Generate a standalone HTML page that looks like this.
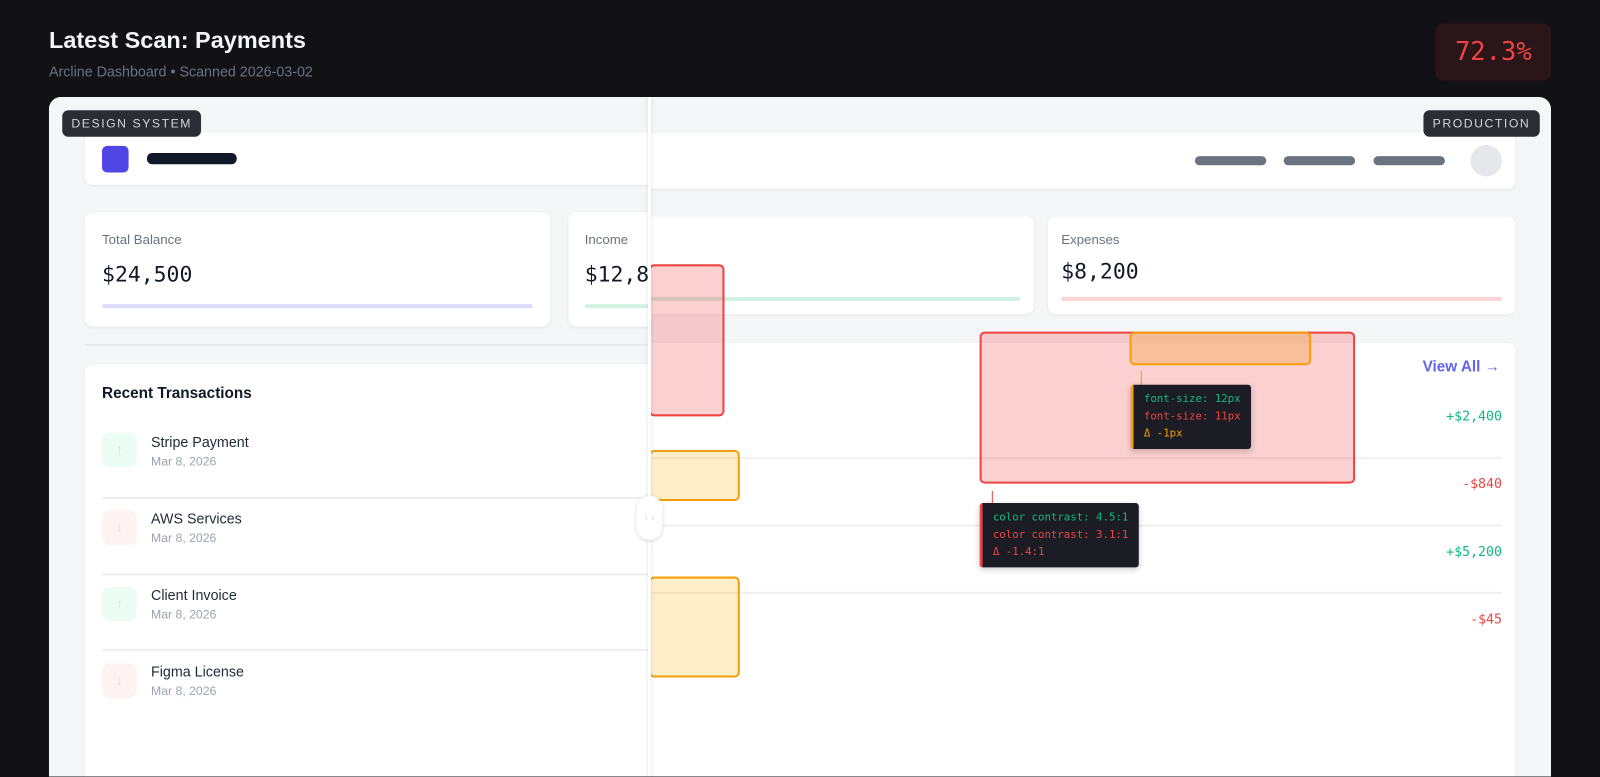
<!DOCTYPE html>
<html style="overflow:hidden;height:777px"><head><style>
*{margin:0;padding:0;box-sizing:border-box}
body{width:1600px;height:777px;background:#111116;font-family:"Liberation Sans",sans-serif;overflow:hidden;position:relative}
#w{position:absolute;left:0;top:0;width:1568px;height:761px;overflow:hidden;transform:scale(1.0204);transform-origin:0 0}
.a{position:absolute}
.mono{font-family:"DejaVu Sans Mono","Liberation Mono",monospace}
.card{position:absolute;background:#fff;border-radius:8px;box-shadow:0 1px 3px rgba(0,0,0,.06)}
.lbl{font-size:13px;color:#6b7280}
.val{font-size:21px;color:#111827}
.bar{position:absolute;height:4px;border-radius:2px}
.tag{position:absolute;background:#2c2c34;color:#d1d5db;font-size:12px;letter-spacing:1.5px;padding:6px 9px;border-radius:6px}
.ic{position:absolute;width:34px;height:34px;border-radius:8px;color:#c9e9d8;font-size:13px;text-align:center;line-height:34px}
.nm{position:absolute;font-size:14px;color:#1f2937}
.dt{position:absolute;font-size:12px;color:#9ca3af}
.hl{position:absolute;height:2px;background:#eef0f2}
.amt{position:absolute;right:48px;font-size:13px}
.tip{position:absolute;background:#1c1c24;font-size:10.5px;line-height:17px;padding:6px 10px;border-radius:3px;box-shadow:0 2px 6px rgba(0,0,0,.2)}
</style></head><body><div id="w">
<div class="a" style="left:48px;top:26px;font-size:23px;font-weight:bold;color:#f3f4f6">Latest Scan: Payments</div>
<div class="a" style="left:48px;top:62px;font-size:14px;color:#6b7280">Arcline Dashboard • Scanned 2026-03-02</div>
<div class="a mono" style="left:1407px;top:23px;width:113px;height:56px;background:#2a1518;border-radius:8px;color:#ef4444;font-size:25px;text-align:center;line-height:56px">72.3%</div>

<div class="a" style="left:48px;top:95px;width:1472px;height:720px;background:#f5f6f8;border-radius:12px;overflow:hidden">
 <div class="card" style="left:0;top:35px;width:1437px;height:55px"></div>
 <div class="a" style="left:1123px;top:58px;width:70px;height:9px;border-radius:5px;background:#6b7280"></div>
 <div class="a" style="left:1210px;top:58px;width:70px;height:9px;border-radius:5px;background:#6b7280"></div>
 <div class="a" style="left:1298px;top:58px;width:70px;height:9px;border-radius:5px;background:#6b7280"></div>
 <div class="a" style="left:1393px;top:47px;width:31px;height:31px;border-radius:50%;background:#e5e7eb"></div>
 <div class="card" style="left:509px;top:117px;width:456px;height:96px"></div>
 <div class="bar" style="left:526px;top:196px;width:426px;background:#d1f2e2"></div>
 <div class="card" style="left:979px;top:117px;width:458px;height:96px"></div>
 <div class="a lbl" style="left:992px;top:132px">Expenses</div>
 <div class="a val mono" style="left:992px;top:159px">$8,200</div>
 <div class="bar" style="left:992px;top:196px;width:432px;background:#fdd5d5"></div>
 <div class="card" style="left:35px;top:241px;width:1402px;height:520px"></div>
 <div class="a" style="right:50px;top:256px;font-size:15px;font-weight:bold;color:#6366f1">View All →</div>
 <div class="hl" style="left:590px;top:353px;width:834px"></div>
 <div class="hl" style="left:590px;top:419px;width:834px"></div>
 <div class="hl" style="left:590px;top:485px;width:834px"></div>
 <div class="amt mono" style="top:306px;color:#10b981">+$2,400</div>
 <div class="amt mono" style="top:372px;color:#ef4444">-$840</div>
 <div class="amt mono" style="top:439px;color:#10b981">+$5,200</div>
 <div class="amt mono" style="top:505px;color:#ef4444">-$45</div>
 <div class="a" style="left:912px;top:230px;width:368px;height:149px;background:rgba(239,68,68,.25);border:2px solid #ef4444;border-radius:5px"></div>
 <div class="a" style="left:1059px;top:230px;width:178px;height:33px;background:rgba(249,160,60,.35);border:2px solid #f59e0b;border-radius:5px"></div>
 <div class="a" style="left:1070px;top:268px;width:1px;height:14px;background:#f59e0b"></div>
 <div class="tip mono" style="left:1060px;top:282px;border-left:3px solid #f59e0b"><div style="color:#10b981">font-size: 12px</div><div style="color:#ef4444">font-size: 11px</div><div style="color:#f59e0b">Δ -1px</div></div>
 <div class="a" style="left:924px;top:386px;width:1px;height:12px;background:#ef4444"></div>
 <div class="tip mono" style="left:912px;top:398px;border-left:3px solid #ef4444"><div style="color:#10b981">color contrast: 4.5:1</div><div style="color:#ef4444">color contrast: 3.1:1</div><div style="color:#ef4444">Δ -1.4:1</div></div>
 <div class="a" style="left:588px;top:164px;width:74px;height:149px;background:rgba(239,68,68,.25);border:2px solid #ef4444;border-radius:5px"></div>
 <div class="a" style="left:588px;top:346px;width:89px;height:50px;background:rgba(251,191,36,.25);border:2px solid #f59e0b;border-radius:5px"></div>
 <div class="a" style="left:588px;top:470px;width:89px;height:99px;background:rgba(251,191,36,.25);border:2px solid #f59e0b;border-radius:5px"></div>

 <div class="a" style="left:0;top:0;width:588px;height:720px;background:#f5f6f8;overflow:hidden">
  <div class="card" style="left:35px;top:35px;width:1402px;height:51px"></div>
  <div class="a" style="left:52px;top:48px;width:26px;height:26px;border-radius:5px;background:#4f46e5"></div>
  <div class="a" style="left:96px;top:55px;width:88px;height:11px;border-radius:5px;background:#111827"></div>
  <div class="card" style="left:35px;top:113px;width:456px;height:112px"></div>
  <div class="a lbl" style="left:52px;top:132px">Total Balance</div>
  <div class="a val mono" style="left:52px;top:162px">$24,500</div>
  <div class="bar" style="left:52px;top:203px;width:422px;background:#dcdcfc"></div>
  <div class="card" style="left:509px;top:113px;width:456px;height:112px"></div>
  <div class="a lbl" style="left:525px;top:132px">Income</div>
  <div class="a val mono" style="left:525px;top:162px">$12,800</div>
  <div class="bar" style="left:525px;top:203px;width:426px;background:#d1f2e2"></div>
  <div class="a" style="left:35px;top:242px;width:1402px;height:2px;background:#e9ebee"></div>
  <div class="card" style="left:35px;top:262px;width:1402px;height:520px"></div>
  <div class="a" style="left:52px;top:282px;font-size:15px;font-weight:bold;color:#111827">Recent Transactions</div>
  <div class="ic" style="left:52px;top:329px;background:#ecfdf5">↑</div>
  <div class="nm" style="left:100px;top:330px">Stripe Payment</div><div class="dt" style="left:100px;top:350px">Mar 8, 2026</div>
  <div class="hl" style="left:52px;top:392px;width:540px"></div>
  <div class="ic" style="left:52px;top:405px;background:#fef2f2;color:#f7d4d4">↓</div>
  <div class="nm" style="left:100px;top:405px">AWS Services</div><div class="dt" style="left:100px;top:425px">Mar 8, 2026</div>
  <div class="hl" style="left:52px;top:467px;width:540px"></div>
  <div class="ic" style="left:52px;top:480px;background:#ecfdf5">↑</div>
  <div class="nm" style="left:100px;top:480px">Client Invoice</div><div class="dt" style="left:100px;top:500px">Mar 8, 2026</div>
  <div class="hl" style="left:52px;top:541px;width:540px"></div>
  <div class="ic" style="left:52px;top:555px;background:#fef2f2;color:#f7d4d4">↓</div>
  <div class="nm" style="left:100px;top:555px">Figma License</div><div class="dt" style="left:100px;top:575px">Mar 8, 2026</div>
 </div>
 <div class="a" style="left:587px;top:0;width:3px;height:720px;background:#fff;box-shadow:0 0 4px rgba(0,0,0,.12)"></div>
 <div class="a" style="left:576px;top:391px;width:25px;height:43px;border-radius:12px;background:#fff;box-shadow:0 1px 4px rgba(0,0,0,.15);color:#d1d5db;font-size:10px;text-align:center;line-height:43px">‹ ›</div>
 <div class="tag" style="left:13px;top:13px">DESIGN SYSTEM</div>
 <div class="tag" style="left:1347px;top:13px">PRODUCTION</div>
</div>
</div></body></html>
